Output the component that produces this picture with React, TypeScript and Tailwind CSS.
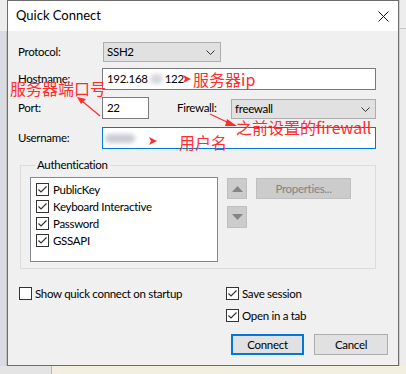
import React from "react";

const ui = "font-['Lato',sans-serif] text-[11.5px] tracking-[-0.3px] text-black";
const cjk = "font-['Noto_Sans_CJK_SC',sans-serif] text-[16px] tracking-normal text-[#ff2d2d] leading-none";

const Check = ({ on }: { on: boolean }) => (
  <div className="w-[13px] h-[13px] shrink-0 border border-[#333] bg-white flex items-center justify-center">
    {on && (
      <svg width="11" height="11" viewBox="0 0 11 11">
        <polyline points="1.5,5.5 4,8 9.5,2.5" fill="none" stroke="#333" strokeWidth="1.2" />
      </svg>
    )}
  </div>
);

const Chevron = () => (
  <svg width="9" height="5" viewBox="0 0 9 5">
    <polyline points="0.5,0.5 4.5,4.5 8.5,0.5" fill="none" stroke="#333" strokeWidth="1" />
  </svg>
);

const Select = ({ value, className }: { value: string; className: string }) => (
  <div className={`h-[20px] border border-[#adadad] bg-[#e1e1e1] flex items-center justify-between pl-[3px] pr-[5px] ${className}`}>
    <span>{value}</span>
    <Chevron />
  </div>
);

const Arrow = () => (
  <svg width="10" height="10" viewBox="0 0 10 10">
    <polygon points="1,1 9,5 1,9 3,5" fill="#ff2d2d" />
  </svg>
);

export default function App() {
  const methods = ["PublicKey", "Keyboard Interactive", "Password", "GSSAPI"];
  return (
    <div className={`relative w-[406px] h-[374px] overflow-hidden bg-[#f2eee0] flex flex-col ${ui}`}>
      <div className="flex h-[366px]">
        <div className="w-[7px] flex flex-col">
          <div className="h-[31px] bg-[#ededed]" />
          <div className="flex-1 bg-[#d9dde3] border-r border-[#c2c2c2]" />
        </div>

        {/* dialog */}
        <div className="w-[392px] h-[366px] border border-[#6d6d6d] bg-[#f0f0f0] flex flex-col">
          <div className="h-[30px] bg-white flex items-center justify-between pl-[8px] pr-[9px]">
            <span className="text-[13px] tracking-normal">Quick Connect</span>
            <svg width="11" height="11" viewBox="0 0 11 11">
              <path d="M0.5 0.5 L10.5 10.5 M10.5 0.5 L0.5 10.5" stroke="#111" strokeWidth="1" />
            </svg>
          </div>

          <div className="flex flex-col pl-[10px] pr-[10px]">
            <div className="mt-[11px] h-[20px] flex items-center">
              <span className="w-[85px]">Protocol:</span>
              <Select value="SSH2" className="w-[118px]" />
            </div>

            <div className="mt-[6px] h-[22px] flex items-center mr-[12px]">
              <span className="w-[84px]">Hostname:</span>
              <div className="flex-1 h-[22px] border border-[#7a7a7a] bg-white flex items-center pl-[4px]">
                <span>192.168</span>
                <span className="w-[13px] h-[10px] mx-[2px] rounded-full bg-[#d4d7dc] blur-[2px]" />
                <span>122</span>
              </div>
            </div>

            <div className="mt-[7px] h-[22px] flex items-center mr-[12px]">
              <span className="w-[84px]">Port:</span>
              <div className="w-[47px] h-[22px] border border-[#7a7a7a] bg-white flex items-center pl-[4px]">22</div>
              <span className="ml-[28px] w-[54px]">Firewall:</span>
              <Select value="freewall" className="flex-1 self-end" />
            </div>

            <div className="mt-[8px] h-[22px] flex items-center mr-[12px]">
              <span className="w-[84px]">Username:</span>
              <div className="flex-1 h-[22px] border border-[#0078d7] bg-white flex items-center pl-[2px]">
                <span className="w-[30px] h-[9px] rounded-full bg-[#c9ccd3] blur-[2px]" />
              </div>
            </div>

            <fieldset className="mt-[8px] ml-[2px] mr-[12px] border border-[#dcdcdc] pl-[9px] pb-[6px]">
              <legend className="ml-[5px] px-[2px] leading-[16px]">Authentication</legend>
              <div className="mt-[4px] flex items-start">
                <div className="w-[188px] h-[85px] border border-[#828790] bg-white pt-[3px] pl-[5px] flex flex-col">
                  {methods.map((m) => (
                    <div key={m} className="h-[17px] flex items-center gap-[4px]">
                      <Check on />
                      <span>{m}</span>
                    </div>
                  ))}
                </div>
                <div className="ml-[9px] mt-[1px] flex flex-col gap-[7px]">
                  <div className="w-[20px] h-[21px] border border-[#bfbfbf] bg-[#cccccc] flex items-center justify-center">
                    <svg width="11" height="6" viewBox="0 0 11 6"><polygon points="0,6 5.5,0 11,6" fill="#858585" /></svg>
                  </div>
                  <div className="w-[20px] h-[22px] border border-[#bfbfbf] bg-[#cccccc] flex items-center justify-center">
                    <svg width="11" height="6" viewBox="0 0 11 6"><polygon points="0,0 5.5,6 11,0" fill="#858585" /></svg>
                  </div>
                </div>
                <div className="ml-[9px] mt-[1px] w-[95px] h-[21px] border border-[#bfbfbf] bg-[#cccccc] text-[#838383] flex items-center justify-center">
                  Properties...
                </div>
              </div>
            </fieldset>

            <div className="mt-[18px] flex">
              <div className="w-[208px] pl-[1px] h-[13px] flex items-center gap-[3px]">
                <Check on={false} />
                <span>Show quick connect on startup</span>
              </div>
              <div className="flex flex-col">
                <div className="h-[13px] flex items-center gap-[3px]">
                  <Check on />
                  <span>Save session</span>
                </div>
                <div className="mt-[9px] h-[13px] flex items-center gap-[3px]">
                  <Check on />
                  <span>Open in a tab</span>
                </div>
                <div className="mt-[12px] ml-[5px] flex gap-[10px]">
                  <div className="w-[73px] h-[21px] border-2 border-[#0078d7] bg-[#e1e1e1] flex items-center justify-center">Connect</div>
                  <div className="w-[74px] h-[21px] border border-[#adadad] bg-[#e1e1e1] flex items-center justify-center">Cancel</div>
                </div>
              </div>
            </div>
          </div>
        </div>

        <div className="flex-1 flex flex-col border-l border-[#cfcfcf]">
          <div className="h-[29px] bg-[#ededed] border-b border-[#c4c4c4]" />
          <div className="flex-1 bg-[#ececec]" />
        </div>
      </div>
      <div className="flex-1 flex">
        <div className="w-[52px] bg-[#e4e4e4] border-r border-[#b8b8b8]" />
        <div className="flex-1" />
      </div>

      {/* red annotations */}
      <div className={`absolute left-[182px] top-[71px] flex items-center gap-[1px] ${cjk}`}>
        <Arrow />
        <span>服务器ip</span>
      </div>
      <div className={`absolute left-[10px] top-[80px] ${cjk}`}>服务器端口号</div>
      <div className={`absolute left-[236px] top-[119px] ${cjk}`}>之前设置的firewall</div>
      <div className="absolute left-[148px] top-[136px]">
        <Arrow />
      </div>
      <div className={`absolute left-[179px] top-[134px] ${cjk}`}>用户名</div>
      <svg className="absolute left-0 top-0" width="406" height="374" viewBox="0 0 406 374">
        <line x1="100" y1="116" x2="82" y2="101" stroke="#ff2d2d" strokeWidth="1.2" />
        <polygon points="77,97 86,99 81,104" fill="#ff2d2d" />
        <line x1="210" y1="114" x2="229" y2="123" stroke="#ff2d2d" strokeWidth="1.2" />
        <polygon points="237,126 227,119 225,126" fill="#ff2d2d" />
      </svg>
    </div>
  );
}
